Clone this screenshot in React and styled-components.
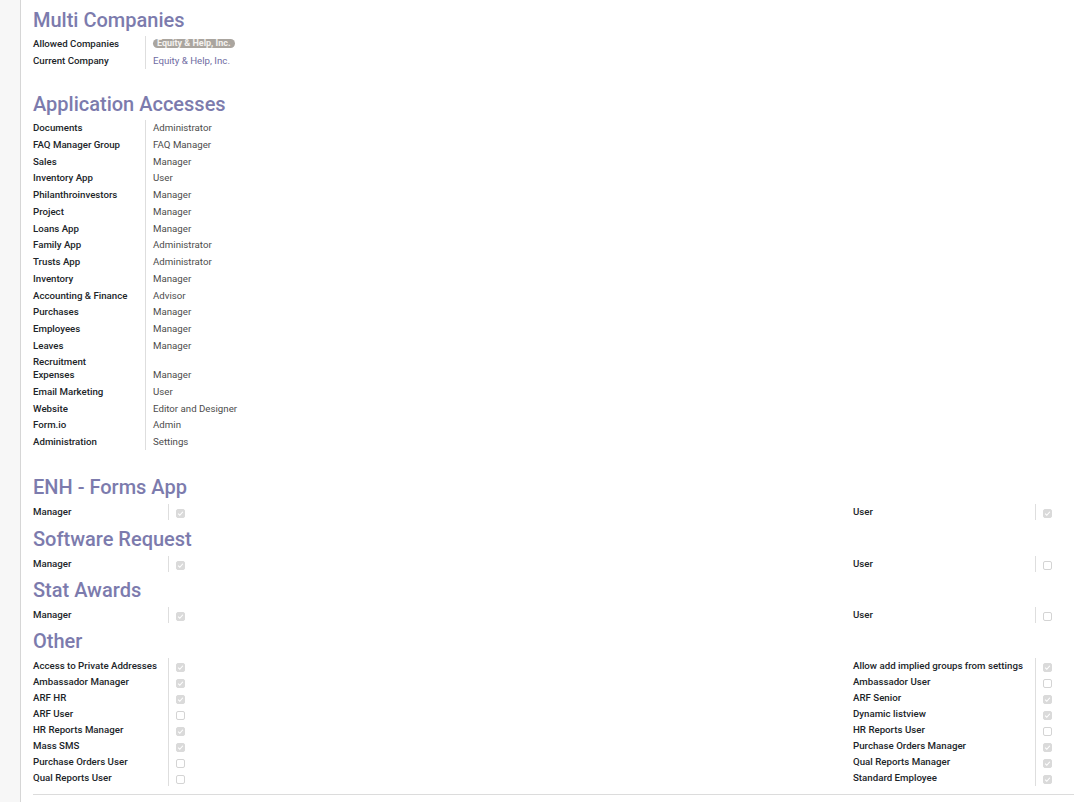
import styled, { createGlobalStyle } from "styled-components";

const GlobalStyle = createGlobalStyle`
	html, body {
		margin: 0;
		background: #ffffff;
	}
	body {
		font-family: Roboto, "Noto Sans", "Liberation Sans", sans-serif;
		color: #212529;
	}
`;

const appAccesses = [
	["Documents", "Administrator"],
	["FAQ Manager Group", "FAQ Manager"],
	["Sales", "Manager"],
	["Inventory App", "User"],
	["Philanthroinvestors", "Manager"],
	["Project", "Manager"],
	["Loans App", "Manager"],
	["Family App", "Administrator"],
	["Trusts App", "Administrator"],
	["Inventory", "Manager"],
	["Accounting & Finance", "Advisor"],
	["Purchases", "Manager"],
	["Employees", "Manager"],
	["Leaves", "Manager"],
	["Recruitment", null],
	["Expenses", "Manager"],
	["Email Marketing", "User"],
	["Website", "Editor and Designer"],
	["Form.io", "Admin"],
	["Administration", "Settings"],
];

const checkGroups = [
	{ title: "ENH - Forms App", gap: 0, rows: [[["Manager", true], ["User", true]]] },
	{ title: "Software Request", gap: 7, rows: [[["Manager", true], ["User", false]]] },
	{ title: "Stat Awards", gap: 6, rows: [[["Manager", true], ["User", false]]] },
	{
		title: "Other",
		gap: 6,
		rows: [
			[["Access to Private Addresses", true], ["Allow add implied groups from settings", true]],
			[["Ambassador Manager", true], ["Ambassador User", false]],
			[["ARF HR", true], ["ARF Senior", true]],
			[["ARF User", false], ["Dynamic listview", true]],
			[["HR Reports Manager", true], ["HR Reports User", false]],
			[["Mass SMS", true], ["Purchase Orders Manager", true]],
			[["Purchase Orders User", false], ["Qual Reports Manager", true]],
			[["Qual Reports User", false], ["Standard Employee", true]],
		],
	},
];

const CheckBox = ({ checked }) => (
	<Box $checked={checked}>
		{checked && (
			<svg width="7" height="7" viewBox="0 0 8 8">
				<path d="M1.3 4.2 L3.2 6 L6.7 2" fill="none" stroke="#ffffff" strokeWidth="1.3" />
			</svg>
		)}
	</Box>
);

const App = () => {
	return (
		<>
			<GlobalStyle />
			<Layout>
				<Gutter />
				<Sheet>
					<Section $after={23}>
						<Heading>Multi Companies</Heading>
						<FieldList>
							<Field>
								<Label>Allowed Companies</Label>
								<Value>
									<Badge>Equity &amp; Help, Inc.</Badge>
								</Value>
							</Field>
							<Field>
								<Label>Current Company</Label>
								<Value $link>Equity &amp; Help, Inc.</Value>
							</Field>
						</FieldList>
					</Section>

					<Section $after={25}>
						<Heading>Application Accesses</Heading>
						<FieldList>
							{appAccesses.map(([label, value]) => (
								<Field key={label} $compact={value === null}>
									<Label $compact={value === null}>{label}</Label>
									<Value>{value}</Value>
								</Field>
							))}
						</FieldList>
					</Section>

					{checkGroups.map((group) => (
						<Section key={group.title} $before={group.gap}>
							<Heading>{group.title}</Heading>
							<CheckGrid>
								{group.rows.map(([left, right]) => (
									<CheckRow key={left[0] + right[0]}>
										<CheckLabel>{left[0]}</CheckLabel>
										<CheckCell>
											<CheckBox checked={left[1]} />
										</CheckCell>
										<CheckLabel>{right[0]}</CheckLabel>
										<CheckCell>
											<CheckBox checked={right[1]} />
										</CheckCell>
									</CheckRow>
								))}
							</CheckGrid>
						</Section>
					))}
					<Divider />
				</Sheet>
			</Layout>
		</>
	);
};

const Layout = styled.div`
	display: flex;
	min-height: 802px;
`;

const Gutter = styled.div`
	flex: none;
	width: 20px;
	background: #f7f7f7;
	border-right: 1px solid #d6d6d6;
`;

const Sheet = styled.div`
	flex: 1;
	padding: 8px 0 0 12px;
`;

const Section = styled.section`
	margin-top: ${(p) => p.$before || 0}px;
	margin-bottom: ${(p) => p.$after || 0}px;
`;

const Heading = styled.h2`
	margin: 0;
	font-size: 20px;
	line-height: 24px;
	font-weight: 500;
	color: #7c7bad;
`;

const FieldList = styled.div`
	margin-top: 3.5px;
`;

const Field = styled.div`
	display: grid;
	grid-template-columns: 112px 1fr;
	height: ${(p) => (p.$compact ? 12.2 : 16.77)}px;
`;

const Label = styled.div`
	display: flex;
	align-items: ${(p) => (p.$compact ? "flex-end" : "center")};
	font-size: 9.7px;
	font-weight: 500;
	line-height: 1;
	color: #212529;
	white-space: nowrap;
`;

const Value = styled.div`
	display: flex;
	align-items: center;
	padding-left: 7px;
	border-left: 1px solid #dedede;
	font-size: 9.7px;
	line-height: 1;
	color: ${(p) => (p.$link ? "#6f6ca3" : "#4c4c4c")};
	white-space: nowrap;
`;

const Badge = styled.span`
	display: inline-block;
	padding: 0 4px;
	border-radius: 5px;
	background: #aaa59f;
	color: #f4f2ef;
	font-size: 9px;
	font-weight: 700;
	line-height: 9px;
`;

const CheckGrid = styled.div`
	margin-top: 5px;
`;

const CheckRow = styled.div`
	display: grid;
	grid-template-columns: 135px 685px 182px 1fr;
	height: 16px;
`;

const CheckLabel = styled.div`
	display: flex;
	align-items: center;
	font-size: 9.7px;
	font-weight: 500;
	line-height: 1;
	color: #212529;
	white-space: nowrap;
`;

const CheckCell = styled.div`
	display: flex;
	align-items: center;
	padding-left: 7px;
	border-left: 1px solid #dedede;
`;

const Box = styled.span`
	display: inline-flex;
	align-items: center;
	justify-content: center;
	box-sizing: border-box;
	width: 9px;
	height: 9px;
	margin-top: 2px;
	border-radius: 2px;
	border: 1px solid ${(p) => (p.$checked ? "#dadada" : "#d4d4d4")};
	background: ${(p) => (p.$checked ? "#dadada" : "#ffffff")};
`;

const Divider = styled.div`
	margin-top: 8px;
	border-top: 1px solid #dcdcdc;
`;

export default App;
